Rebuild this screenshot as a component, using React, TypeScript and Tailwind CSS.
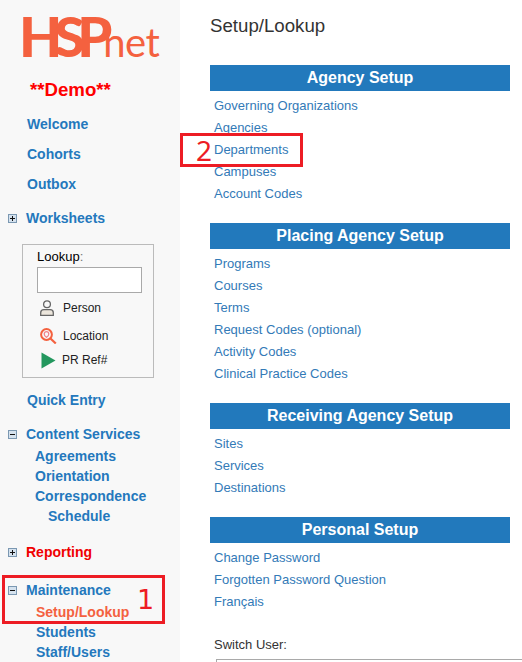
const sans = "font-['Liberation_Sans',Arial,sans-serif]";

const sections = [
  {
    title: "Agency Setup",
    links: ["Governing Organizations", "Agencies", "Departments", "Campuses", "Account Codes"],
  },
  {
    title: "Placing Agency Setup",
    links: ["Programs", "Courses", "Terms", "Request Codes (optional)", "Activity Codes", "Clinical Practice Codes"],
  },
  {
    title: "Receiving Agency Setup",
    links: ["Sites", "Services", "Destinations"],
  },
  {
    title: "Personal Setup",
    links: ["Change Password", "Forgotten Password Question", "Français"],
  },
];

const Toggle = ({ open }: { open?: boolean }) => (
  <svg width="9" height="9" viewBox="0 0 9 9" className="mr-[9px] ml-2 shrink-0">
    <rect x="0.5" y="0.5" width="8" height="8" fill="#d5e2ee" stroke="#7b98b2" />
    <path d={open ? "M2 4.5h5" : "M2 4.5h5M4.5 2v5"} stroke="#111" strokeWidth="1" />
  </svg>
);

const NavLink = ({ label, className }: { label: string; className: string }) => (
  <a className={`block text-[14px] leading-[20px] font-bold text-[#2478bd] ${className}`}>{label}</a>
);

const NavHead = ({ label, open, red }: { label: string; open?: boolean; red?: boolean }) => (
  <div className="flex items-center h-[20px]">
    <Toggle open={open} />
    <span className={`text-[14px] font-bold ${red ? "text-[#f00000]" : "text-[#2478bd]"}`}>{label}</span>
  </div>
);

const Sidebar = () => (
  <aside className="w-[180px] shrink-0 bg-[#f8f8f8] h-full">
    <div className="flex items-baseline pl-[19px] pt-[8px] h-[70px] text-[#f4613f] leading-[56px]">
      <span className="font-['Lato',sans-serif] font-black text-[56px] tracking-[-8px]">HSP</span>
      <span className="font-['Lato',sans-serif] text-[40px] tracking-[-0.5px] ml-[-1px]">net</span>
    </div>
    <div className="pl-[30px] mt-[8px] h-[24px] text-[18.67px] leading-[24px] font-bold text-[#ff0000]">**Demo**</div>
    <div className="mt-[12px] flex flex-col gap-[10px]">
      <NavLink label="Welcome" className="pl-[27px]" />
      <NavLink label="Cohorts" className="pl-[27px]" />
      <NavLink label="Outbox" className="pl-[27px]" />
    </div>
    <div className="mt-[14px]">
      <NavHead label="Worksheets" />
    </div>
    <div className="ml-[22px] mt-[16px] w-[132px] h-[134px] border border-[#bbbbbb] pl-[14px] pt-[4px] text-[12px] text-[#222]">
      <div className="leading-[16px] text-[13px] text-[#000]">
        Lookup<span className="text-[#777]">:</span>
      </div>
      <input className="block mt-[2px] w-[105px] h-[26px] border border-[#a9a9a9] bg-white" />
      <div className="flex items-center h-[24px] mt-[3px]">
        <svg width="14" height="16" viewBox="0 0 14 16" fill="none" stroke="#666666" strokeWidth="1.3" className="ml-[3px] shrink-0">
          <circle cx="7" cy="4.2" r="3.4" />
          <path d="M0.7 15.3v-2.6c0-1.7 1.5-3 3.2-3h6.2c1.7 0 3.2 1.3 3.2 3v2.6z" fill="#ece6dc" />
        </svg>
        <span className="ml-[9px]">Person</span>
      </div>
      <div className="flex items-center h-[24px] mt-[4px]">
        <svg width="17" height="16" viewBox="0 0 17 16" fill="none" className="ml-[3px] shrink-0">
          <circle cx="6.5" cy="6.5" r="5.4" stroke="#f4613f" strokeWidth="2" />
          <path d="M6.5 3.6a2.3 2.3 0 0 1 2.3 2.3c0 1.5-2.3 3.5-2.3 3.5s-2.3-2-2.3-3.5a2.3 2.3 0 0 1 2.3-2.3z" stroke="#f0808a" strokeWidth="1.2" />
          <path d="M10.5 10.5l5.3 5" stroke="#f4613f" strokeWidth="2.2" />
        </svg>
        <span className="ml-[6px]">Location</span>
      </div>
      <div className="flex items-center h-[24px]">
        <svg width="15" height="17" viewBox="0 0 15 17" className="ml-[4px] shrink-0">
          <path d="M0.5 0.5L14.5 8.5L0.5 16.5Z" fill="#23975e" />
        </svg>
        <span className="ml-[6px]">PR Ref#</span>
      </div>
    </div>
    <div className="mt-[12px]">
      <NavLink label="Quick Entry" className="pl-[27px]" />
    </div>
    <div className="mt-[14px]">
      <NavHead label="Content Services" open />
    </div>
    <div className="mt-[2px]">
      <NavLink label="Agreements" className="pl-[35px]" />
      <NavLink label="Orientation" className="pl-[35px]" />
      <NavLink label="Correspondence" className="pl-[35px]" />
      <NavLink label="Schedule" className="pl-[48px]" />
    </div>
    <div className="mt-[16px]">
      <NavHead label="Reporting" red />
    </div>
    <div className="mt-[18px]">
      <NavHead label="Maintenance" open />
    </div>
    <div className="mt-[2px]">
      <NavLink label="Setup/Lookup" className="pl-[36px] !text-[#f4613f]" />
      <NavLink label="Students" className="pl-[36px]" />
      <NavLink label="Staff/Users" className="pl-[36px]" />
    </div>
  </aside>
);

const Main = () => (
  <main className="w-[342px] shrink-0 pl-[30px] pr-[12px]">
    <h1 className="mt-[14px] text-[18.67px] leading-[24px] text-[#333333]">Setup/Lookup</h1>
    <div className="mt-[27px] flex flex-col gap-[18px]">
      {sections.map((s) => (
        <section key={s.title}>
          <h2 className="h-[26px] bg-[#2279bc] text-white text-center text-[16px] leading-[26px] font-bold">{s.title}</h2>
          <ul className="pt-[4px] pl-[4px]">
            {s.links.map((l) => (
              <li key={l} className="h-[22px] leading-[22px] text-[13px] text-[#337ab7]">
                {l}
              </li>
            ))}
          </ul>
        </section>
      ))}
    </div>
    <div className="mt-[23px] text-[13px] leading-[18px] text-[#333333] pl-[4px]">Switch User:</div>
    <div className="ml-[6px] mt-[5px] h-[24px] w-[320px] border border-[#a9a9a9]" />
  </main>
);

export default function App() {
  return (
    <div className={`relative flex w-[522px] h-[662px] overflow-hidden bg-white ${sans}`}>
      <Sidebar />
      <Main />
      {/* red annotations drawn over the screenshot */}
      <div className="absolute left-[2px] top-[575px] w-[163px] h-[49px] border-[3px] border-[#ed1c24]" />
      <span className="absolute left-[137px] top-[583px] text-[27px] leading-[34px] text-[#ed1c24] font-['DejaVu_Sans',sans-serif]">1</span>
      <div className="absolute left-[180px] top-[133px] w-[123px] h-[34px] border-[3px] border-[#ed1c24]" />
      <span className="absolute left-[196px] top-[133px] text-[28px] leading-[34px] text-[#ed1c24] font-['Noto_Sans',sans-serif]">2</span>
    </div>
  );
}
